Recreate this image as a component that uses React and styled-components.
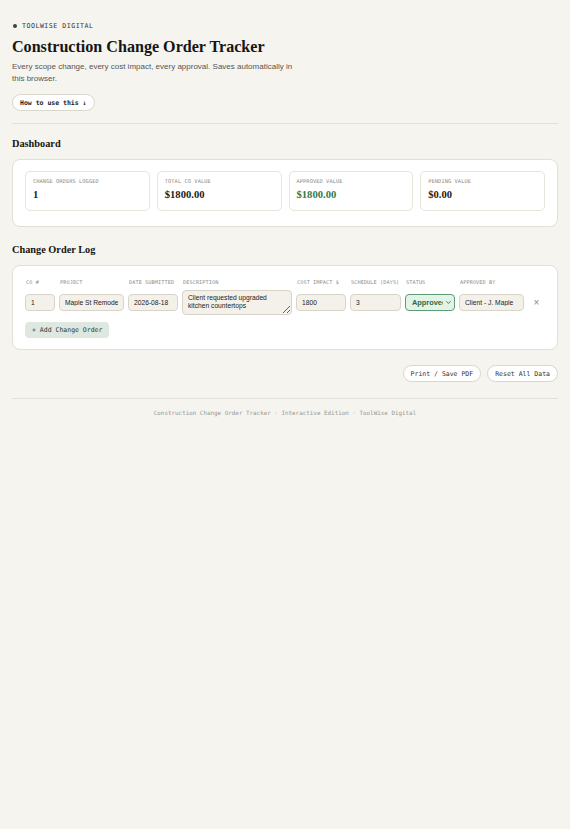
import React, { useState } from "react";
import styled, { createGlobalStyle } from "styled-components";
import { ChevronDown } from "lucide-react";

const GlobalStyle = createGlobalStyle`
  html, body {
    margin: 0;
    padding: 0;
    background: #f5f4ef;
  }
  body {
    font-family: "Liberation Sans", Arial, sans-serif;
    color: #1c1c1a;
  }
  * { box-sizing: border-box; }
`;

const MONO = `"DejaVu Sans Mono", "Liberation Mono", monospace`;
const SERIF = `"Liberation Serif", "Times New Roman", serif`;

const Page = styled.div`
  padding: 20px 12px 20px;
`;

const Eyebrow = styled.div`
  display: flex;
  align-items: center;
  gap: 5px;
  font-family: ${MONO};
  font-size: 6.6px;
  letter-spacing: 0.5px;
  color: #333;
  height: 12px;
`;

const Dot = styled.span`
  width: 4px;
  height: 4px;
  border-radius: 50%;
  background: #2f4a3c;
  margin-left: 1px;
`;

const Title = styled.h1`
  font-family: ${SERIF};
  font-weight: 700;
  font-size: 16.1px;
  line-height: 20px;
  margin: 5px 0 0;
  color: #161614;
`;

const Subtitle = styled.p`
  font-size: 8px;
  line-height: 12px;
  color: #555;
  max-width: 290px;
  margin: 4px 0 0;
`;

const PillButton = styled.button`
  display: block;
  font-family: ${MONO};
  font-size: 6.5px;
  font-weight: ${(p) => (p.$bold ? 700 : 400)};
  color: ${(p) => (p.$bold ? "#1c1c1a" : "#333")};
  background: #fff;
  border: 1px solid #d9d6cb;
  border-radius: 10px;
  height: 17px;
  padding: 0 7px;
  cursor: pointer;
`;

const HowTo = styled(PillButton)`
  margin-top: 9px;
  height: 17px;
`;

const Divider = styled.hr`
  border: none;
  border-top: 1px solid #e4e1d8;
  margin: ${(p) => p.$margin || "12px 0 0"};
`;

const SectionTitle = styled.h2`
  font-family: ${SERIF};
  font-weight: 700;
  font-size: 10.3px;
  line-height: 14px;
  margin: ${(p) => p.$margin || "13px 0 0"};
  color: #161614;
`;

const Card = styled.div`
  background: #fff;
  border: 1.5px solid #e2dfd3;
  border-radius: 8px;
  margin-top: 8px;
  padding: ${(p) => p.$padding || "11px 12px"};
`;

const StatGrid = styled.div`
  display: grid;
  grid-template-columns: repeat(4, 1fr);
  gap: 7px;
`;

const Stat = styled.div`
  border: 1px solid #e7e4da;
  border-radius: 5px;
  height: 40px;
  padding: 5px 7px 0;
`;

const StatLabel = styled.div`
  font-family: ${MONO};
  font-size: 5.3px;
  letter-spacing: 0.1px;
  color: #8a8a85;
  text-transform: uppercase;
  line-height: 8px;
`;

const StatValue = styled.div`
  font-family: ${SERIF};
  font-weight: 700;
  font-size: 10.6px;
  line-height: 14px;
  margin-top: 3px;
  color: ${(p) => p.$color || "#1c1c1a"};
`;

const LogGrid = styled.div`
  display: grid;
  grid-template-columns: 30px 65px 50px 110px 50px 51px 50px 65px 1fr;
  column-gap: 4px;
  align-items: center;
`;

const HeadCell = styled.div`
  font-family: ${MONO};
  font-size: 5.2px;
  letter-spacing: 0.1px;
  color: #8d8d88;
  text-transform: uppercase;
  padding-left: 1px;
  line-height: 8px;
  margin-bottom: 4px;
  white-space: nowrap;
`;

const Field = styled.input`
  width: 100%;
  height: 17px;
  font-family: "Liberation Sans", Arial, sans-serif;
  font-size: 6.7px;
  color: #222;
  background: #f3f1ea;
  border: 1px solid #d8d4c7;
  border-radius: 4px;
  padding: 0 5px;
  outline: none;
`;

const Area = styled.textarea`
  width: 100%;
  height: 25px;
  font-family: "Liberation Sans", Arial, sans-serif;
  font-size: 6.7px;
  line-height: 8px;
  color: #222;
  background: #f3f1ea;
  border: 1px solid #d8d4c7;
  border-radius: 4px;
  padding: 3px 5px;
  resize: vertical;
  display: block;
  outline: none;
`;

const SelectWrap = styled.div`
  position: relative;
  height: 17px;
`;

const StatusSelect = styled.select`
  appearance: none;
  display: block;
  width: 100%;
  height: 17px;
  font-family: "Liberation Sans", Arial, sans-serif;
  font-size: 7.4px;
  font-weight: 700;
  color: #2c6a45;
  background: #e2f3e7;
  border: 1px solid #5e9c73;
  border-radius: 4px;
  padding: 0 11px 0 6px;
  outline: none;
  white-space: nowrap;
  overflow: hidden;
`;

const Caret = styled(ChevronDown)`
  position: absolute;
  right: 3px;
  top: 5px;
  width: 7px;
  height: 7px;
  color: #2c6a45;
  pointer-events: none;
`;

const RemoveButton = styled.button`
  border: none;
  background: none;
  color: #8a8a86;
  font-size: 10px;
  line-height: 1;
  padding: 0;
  cursor: pointer;
  justify-self: center;
`;

const AddButton = styled.button`
  display: block;
  font-family: ${MONO};
  font-size: 6.5px;
  color: #2b3a31;
  background: #dfe7e1;
  border: none;
  border-radius: 4px;
  height: 16px;
  padding: 0 7px;
  margin-top: 7px;
  cursor: pointer;
`;

const Actions = styled.div`
  display: flex;
  justify-content: flex-end;
  gap: 6px;
  margin-top: 15px;
`;

const Footer = styled.div`
  font-family: ${MONO};
  font-size: 5.9px;
  color: #9a9a94;
  text-align: center;
  margin-top: 11px;
`;

const initialRows = [
  {
    id: 1,
    co: "1",
    project: "Maple St Remodel",
    date: "2026-08-18",
    description: "Client requested upgraded kitchen countertops",
    cost: "1800",
    schedule: "3",
    status: "Approved",
    approvedBy: "Client - J. Maple",
  },
];

const money = (n) => `$${n.toFixed(2)}`;

export default function App() {
  const [rows, setRows] = useState(initialRows);

  const update = (id, key, value) =>
    setRows((rs) => rs.map((r) => (r.id === id ? { ...r, [key]: value } : r)));

  const total = rows.reduce((s, r) => s + (parseFloat(r.cost) || 0), 0);
  const approved = rows
    .filter((r) => r.status === "Approved")
    .reduce((s, r) => s + (parseFloat(r.cost) || 0), 0);
  const pending = rows
    .filter((r) => r.status === "Pending")
    .reduce((s, r) => s + (parseFloat(r.cost) || 0), 0);

  const addRow = () =>
    setRows((rs) => [
      ...rs,
      {
        id: Date.now(),
        co: String(rs.length + 1),
        project: "",
        date: "",
        description: "",
        cost: "",
        schedule: "",
        status: "Pending",
        approvedBy: "",
      },
    ]);

  return (
    <>
      <GlobalStyle />
      <Page>
        <Eyebrow>
          <Dot />
          TOOLWISE DIGITAL
        </Eyebrow>
        <Title>Construction Change Order Tracker</Title>
        <Subtitle>
          Every scope change, every cost impact, every approval. Saves automatically in this
          browser.
        </Subtitle>
        <HowTo $bold>How to use this ↓</HowTo>

        <Divider />

        <SectionTitle>Dashboard</SectionTitle>
        <Card $padding="11px 12px 15px">
          <StatGrid>
            <Stat>
              <StatLabel>Change Orders Logged</StatLabel>
              <StatValue>{rows.length}</StatValue>
            </Stat>
            <Stat>
              <StatLabel>Total CO Value</StatLabel>
              <StatValue>{money(total)}</StatValue>
            </Stat>
            <Stat>
              <StatLabel>Approved Value</StatLabel>
              <StatValue $color="#2f7a4e">{money(approved)}</StatValue>
            </Stat>
            <Stat>
              <StatLabel>Pending Value</StatLabel>
              <StatValue>{money(pending)}</StatValue>
            </Stat>
          </StatGrid>
        </Card>

        <SectionTitle $margin="16px 0 0">Change Order Log</SectionTitle>
        <Card $padding="12px 12px 11px">
          <LogGrid>
            <HeadCell>CO #</HeadCell>
            <HeadCell>Project</HeadCell>
            <HeadCell>Date Submitted</HeadCell>
            <HeadCell>Description</HeadCell>
            <HeadCell>Cost Impact $</HeadCell>
            <HeadCell>Schedule (days)</HeadCell>
            <HeadCell>Status</HeadCell>
            <HeadCell>Approved By</HeadCell>
            <HeadCell />
            {rows.map((r) => (
              <React.Fragment key={r.id}>
                <Field value={r.co} onChange={(e) => update(r.id, "co", e.target.value)} />
                <Field value={r.project} onChange={(e) => update(r.id, "project", e.target.value)} />
                <Field value={r.date} onChange={(e) => update(r.id, "date", e.target.value)} />
                <Area
                  value={r.description}
                  onChange={(e) => update(r.id, "description", e.target.value)}
                />
                <Field value={r.cost} onChange={(e) => update(r.id, "cost", e.target.value)} />
                <Field value={r.schedule} onChange={(e) => update(r.id, "schedule", e.target.value)} />
                <SelectWrap>
                  <StatusSelect
                    value={r.status}
                    onChange={(e) => update(r.id, "status", e.target.value)}
                  >
                    <option>Pending</option>
                    <option>Approved</option>
                    <option>Rejected</option>
                  </StatusSelect>
                  <Caret strokeWidth={3} />
                </SelectWrap>
                <Field
                  value={r.approvedBy}
                  onChange={(e) => update(r.id, "approvedBy", e.target.value)}
                />
                <RemoveButton onClick={() => setRows((rs) => rs.filter((x) => x.id !== r.id))}>
                  ×
                </RemoveButton>
              </React.Fragment>
            ))}
          </LogGrid>
          <AddButton onClick={addRow}>+ Add Change Order</AddButton>
        </Card>

        <Actions>
          <PillButton onClick={() => window.print()}>Print / Save PDF</PillButton>
          <PillButton onClick={() => setRows([])}>Reset All Data</PillButton>
        </Actions>

        <Divider $margin="16px 0 0" />
        <Footer>Construction Change Order Tracker · Interactive Edition · ToolWise Digital</Footer>
      </Page>
    </>
  );
}
